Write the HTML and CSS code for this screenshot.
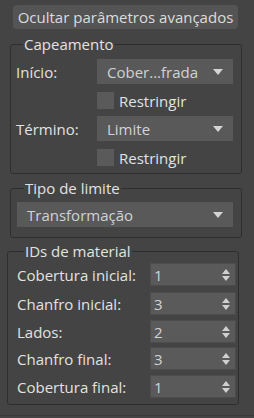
FILE: index.html
```html
<!DOCTYPE html>
<html lang="pt">
<head>
<meta charset="utf-8">
<link rel="stylesheet" href="styles.css">
</head>
<body>
<div class="panel">
  <button class="toggle">Ocultar parâmetros avançados</button>

  <fieldset class="group g-cap">
    <legend>Capeamento</legend>
    <div class="rows">
      <div class="row r1">
        <span class="label">Início:</span>
        <div class="select"><span>Cober...frada</span><i class="arrow"></i></div>
      </div>
      <div class="row r2">
        <span class="label"></span>
        <label class="check"><span class="box"></span><span>Restringir</span></label>
      </div>
      <div class="row r3">
        <span class="label">Término:</span>
        <div class="select"><span>Limite</span><i class="arrow"></i></div>
      </div>
      <div class="row r4">
        <span class="label"></span>
        <label class="check"><span class="box"></span><span>Restringir</span></label>
      </div>
    </div>
  </fieldset>

  <fieldset class="group g-type">
    <legend>Tipo de limite</legend>
    <div class="select wide"><span>Transformação</span><i class="arrow"></i></div>
  </fieldset>

  <fieldset class="group g-ids">
    <legend>IDs de material</legend>
    <div class="ids">
      <div class="idrow s1"><span class="label">Cobertura inicial:</span><div class="spin"><span>1</span><i class="ud"><b class="up"></b><b class="dn"></b></i></div></div>
      <div class="idrow s2"><span class="label">Chanfro inicial:</span><div class="spin"><span>3</span><i class="ud"><b class="up"></b><b class="dn"></b></i></div></div>
      <div class="idrow s3"><span class="label">Lados:</span><div class="spin"><span>2</span><i class="ud"><b class="up"></b><b class="dn"></b></i></div></div>
      <div class="idrow s4"><span class="label">Chanfro final:</span><div class="spin"><span>3</span><i class="ud"><b class="up"></b><b class="dn"></b></i></div></div>
      <div class="idrow s5"><span class="label">Cobertura final:</span><div class="spin"><span>1</span><i class="ud"><b class="up"></b><b class="dn"></b></i></div></div>
    </div>
  </fieldset>
  <div class="footer"></div>
</div>
</body>
</html>
```

FILE: styles.css
```css
* { box-sizing: border-box; }
html, body {
  margin: 0;
  padding: 0;
  background: #444444;
}
body {
  width: 254px;
  height: 418px;
  overflow: hidden;
  font-family: "Open Sans", "Noto Sans", sans-serif;
  font-size: 15px;
  color: #e2e2e2;
}
.panel {
  display: flex;
  flex-direction: column;
  align-items: flex-start;
}
.toggle {
  margin: 5px 0 0 13px;
  width: 225px;
  height: 24px;
  padding: 0;
  border: none;
  border-radius: 4px;
  background: #545454;
  color: #dcdcdc;
  font: inherit;
  font-size: 15px;
  line-height: 24px;
  text-align: center;
  white-space: nowrap;
}
.group {
  margin: 0;
  padding: 0;
  border: 1px solid #2e2e2e;
  border-radius: 3px;
  width: 232px;
  min-width: 0;
}
.group legend {
  margin-left: 7px;
  padding: 0 1px;
  line-height: 16px;
  height: 16px;
  font-size: 15px;
  color: #e2e2e2;
}
.g-cap { margin: 7px 0 0 10px; padding: 7px 8px 7px 5px; }
.g-type { margin: 6px 0 0 10px; padding: 6px 8px 10px 6px; }
.g-ids { margin: 5px 0 0 7px; padding: 4px 2px 6px 9px; }

.rows { display: flex; flex-direction: column; }
.row { display: flex; align-items: center; }
.row .label { width: 81px; flex: none; }
.r1, .r3 { height: 25px; }
.r2, .r4 { height: 17px; }
.r2 { margin-top: 8px; }
.r3 { margin-top: 7px; }
.r4 { margin-top: 8px; }

.select {
  position: relative;
  display: flex;
  align-items: center;
  width: 136px;
  height: 25px;
  background: #595959;
  color: #cfd3d6;
  padding-left: 10px;
}
.select.wide { width: 216px; }
.arrow {
  position: absolute;
  right: 10px;
  top: 50%;
  margin-top: -3px;
  width: 0;
  height: 0;
  border-left: 5px solid transparent;
  border-right: 5px solid transparent;
  border-top: 6px solid #d4d4d4;
}
.check {
  display: flex;
  align-items: center;
  gap: 5px;
}
.check .box {
  width: 17px;
  height: 17px;
  background: #5a5a5a;
  flex: none;
}

.ids { display: flex; flex-direction: column; }
.idrow { display: flex; align-items: center; height: 23px; }
.idrow .label { width: 133px; flex: none; }
.s2 { margin-top: 6px; }
.s3 { margin-top: 5px; }
.s4 { margin-top: 4px; }
.s5 { margin-top: 5px; }
.spin {
  position: relative;
  display: flex;
  align-items: center;
  width: 87px;
  height: 23px;
  background: #5a5a5a;
  border: 1px solid #4c4c4c;
  color: #cfd4d9;
  padding-left: 3px;
}
.ud {
  position: absolute;
  right: 5px;
  top: 50%;
  margin-top: -6px;
  display: flex;
  flex-direction: column;
  gap: 2px;
}
.ud b { display: block; width: 0; height: 0; border-left: 4px solid transparent; border-right: 4px solid transparent; }
.ud .up { border-bottom: 5px solid #cfcfcf; }
.ud .dn { border-top: 5px solid #cfcfcf; }
.footer {
  margin-top: 10px;
  width: 254px;
  height: 5px;
  border-top: 1px solid #3a3a3a;
  background: #444444;
}
```
